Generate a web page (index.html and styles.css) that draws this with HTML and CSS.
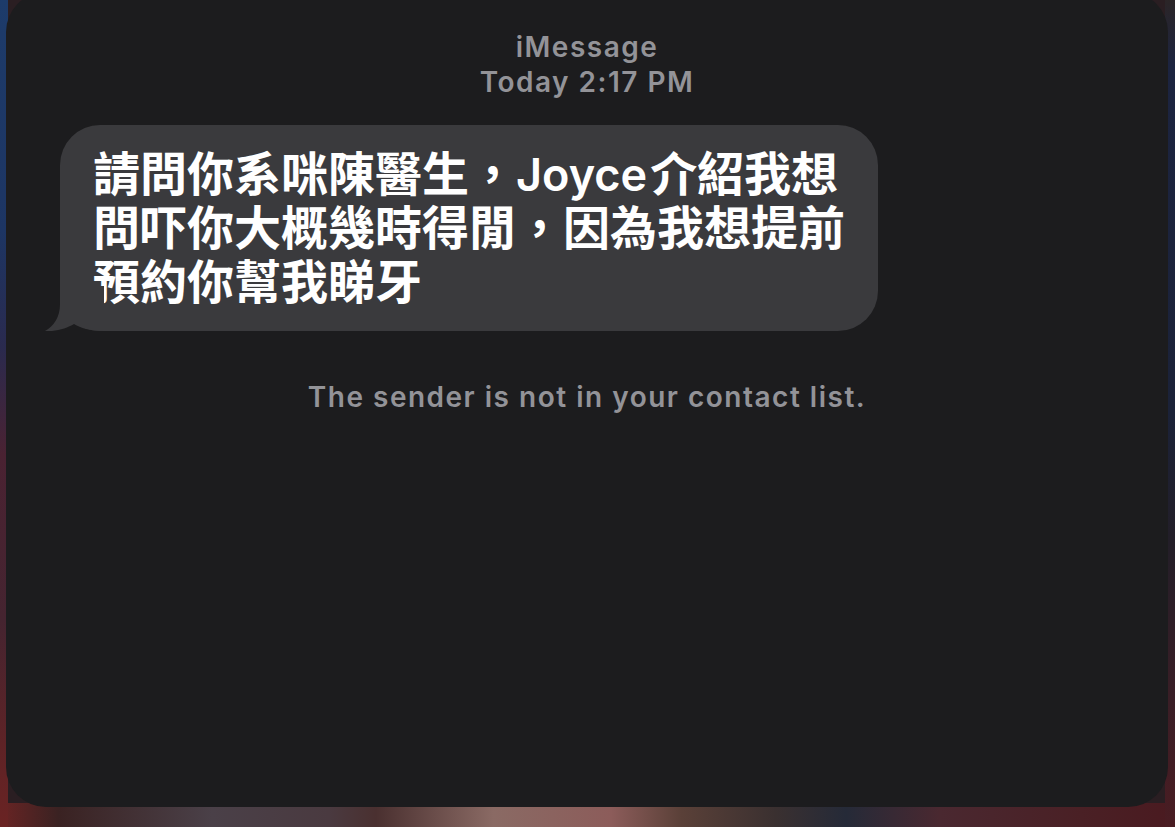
FILE: index.html
```html
<!DOCTYPE html>
<html lang="zh-Hant">
<head>
  <meta charset="UTF-8">
  <meta name="viewport" content="width=device-width, initial-scale=1.0">
  <title>iMessage</title>
  <link rel="stylesheet" href="styles.css">
</head>
<body>
  <!-- khung tin nhắn -->
  <div class="card">
    <div class="meta">
      <div>iMessage</div>
      <div>Today 2:17 PM</div>
    </div>

    <div class="bubble">
      <p class="text"><span>請問你系咪陳醫生，</span><span class="latin">Joyce</span><span>介紹我想</span><span>問吓你大概幾時得閒，因為我想提前預約你幫我睇牙</span></p>
      <svg class="tail" width="60" height="45" viewBox="0 0 60 45">
        <path d="M16,0 L16,18 C16,31 10,40 1,45 C12,46 23,42 30,38 C37,42 45,45 60,45 L60,0 Z" fill="#3a3a3d"/>
      </svg>
    </div>

    <p class="notice">The sender is not in your contact list.</p>
  </div>
</body>
</html>
```

FILE: styles.css
```css
/* === NỀN === */
html, body {
  margin: 0;
  padding: 0;
  height: 100%;
  overflow: hidden;
}

body {
  font-family: Inter, "Noto Sans CJK TC", sans-serif;
  background-color: #2a1e22;
  background-image:
    linear-gradient(to bottom, #1d3b6a 0%, #1d3563 28%, #2a2a4e 42%, #4a2232 55%, #452430 75%, #5e2326 90%, #6a2323 100%),
    linear-gradient(to bottom, #2b2527 0%, #1c2440 8%, #1b2238 50%, #221e28 65%, #3a1e26 85%, #4a1c22 100%),
    linear-gradient(to right, #6a2424 0%, #3a2222 5%, #4a4048 18%, #4a3a40 28%, #4a3030 32%, #8a6a64 42%, #8c5c5a 52%, #5a4038 58%, #3a3030 66%, #252a38 72%, #4a2830 80%, #4a2025 92%, #4a1a20 100%);
  background-size: 8px 100%, 10px 100%, 100% 24px;
  background-position: left top, right top, left bottom;
  background-repeat: no-repeat;
}

/* === KHUNG === */
.card {
  box-sizing: border-box;
  margin: -8px 7px 0 6px;
  height: 815px;
  background: #1c1c1e;
  border-radius: 40px;
  padding: 38px 54px 0;
}

.meta {
  text-align: center;
  color: #939398;
  font-size: 28px;
  font-weight: 600;
  letter-spacing: 1.5px;
  line-height: 35px;
}

/* === BONG BÓNG === */
.bubble {
  position: relative;
  box-sizing: border-box;
  width: 818px;
  margin-top: 25px;
  padding: 22px 28px 22px 33px;
  background: #3a3a3d;
  border-radius: 40px;
}

.text {
  margin: 0;
  color: #fff;
  font-size: 47px;
  font-weight: 700;
  line-height: 54px;
}

.latin {
  font-size: 45px;
  font-weight: 600;
  line-height: 1;
  margin-right: 3px;
}

.tail {
  position: absolute;
  left: -16px;
  bottom: 0;
}

.notice {
  margin: 49px 0 0;
  text-align: center;
  color: #939398;
  font-size: 28px;
  font-weight: 600;
  letter-spacing: 1.5px;
  line-height: 34px;
}
```
